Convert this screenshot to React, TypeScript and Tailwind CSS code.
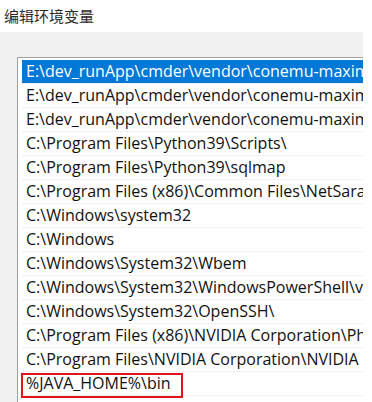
import React from "react";

const rows = [
  "E:\\dev_runApp\\cmder\\vendor\\conemu-maximus5",
  "E:\\dev_runApp\\cmder\\vendor\\conemu-maximus5\\ConEmu",
  "E:\\dev_runApp\\cmder\\vendor\\conemu-maximus5\\ConEmu\\Scripts",
  "C:\\Program Files\\Python39\\Scripts\\",
  "C:\\Program Files\\Python39\\sqlmap",
  "C:\\Program Files (x86)\\Common Files\\NetSarang",
  "C:\\Windows\\system32",
  "C:\\Windows",
  "C:\\Windows\\System32\\Wbem",
  "C:\\Windows\\System32\\WindowsPowerShell\\v1.0\\",
  "C:\\Windows\\System32\\OpenSSH\\",
  "C:\\Program Files (x86)\\NVIDIA Corporation\\PhysX\\Common",
  "C:\\Program Files\\NVIDIA Corporation\\NVIDIA NvDLISR",
  "%JAVA_HOME%\\bin",
];

export default function App() {
  return (
    <div
      className="w-[372px] h-[402px] bg-white overflow-hidden flex flex-col"
      style={{ fontFamily: '"Open Sans", "Noto Sans CJK SC", sans-serif' }}
    >
      <div className="h-[32px] pl-[4px] pt-[7px] text-[15px] leading-[18px] text-[#2a2a2a] shrink-0" style={{ fontFamily: '"Noto Sans CJK SC", sans-serif' }}>
        编辑环境变量
      </div>
      <div className="w-[363px] flex-1 bg-[#f0f0f0] pt-[25px] pl-[17px] overflow-hidden">
        <div className="h-full border-l border-t border-[#a0a0a0] bg-white pt-[2px] pl-[4px] overflow-hidden">
          {rows.map((r, i) => {
            const sel = i === 0;
            const last = i === rows.length - 1;
            return (
              <div
                key={i}
                className={
                  "relative h-[24px] border-b border-[#f0f0f0] whitespace-nowrap pl-[4px] text-[16px] leading-[23px] " +
                  (sel ? "bg-[#0078d7] text-white" : "text-[#111]")
                }
              >
                {r}
                {last && (
                  <div className="absolute left-[-1px] top-[1px] w-[162px] h-[25px] border-2 border-[#e0151b]" />
                )}
              </div>
            );
          })}
        </div>
      </div>
    </div>
  );
}
